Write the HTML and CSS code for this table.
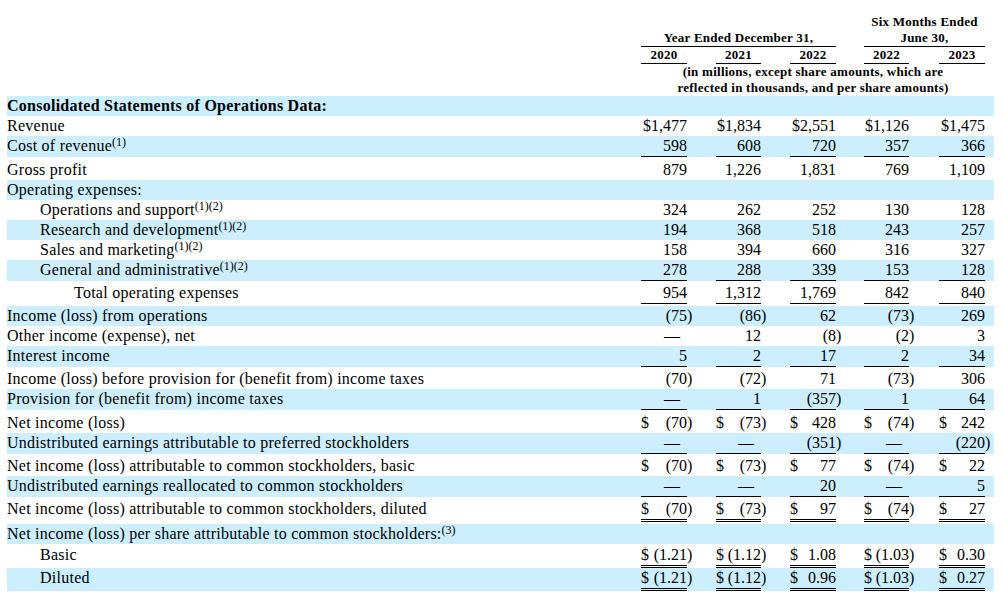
FILE: index.html
```html
<!DOCTYPE html>
<html>
<head>
<meta charset="UTF-8">
<title>Consolidated Statements of Operations Data</title>

<link rel="stylesheet" href="styles.css">
</head>

<body>

<table class="fin">
  <colgroup>
    <col style="width:634px"><col style="width:46px"><col style="width:29px"><col style="width:45px"><col style="width:29px"><col style="width:46px"><col style="width:28px"><col style="width:45px"><col style="width:30px"><col style="width:46px"><col style="width:9px">
  </colgroup>

  <tr class="hd">
    <td></td><td colspan="5"></td><td></td>
    <td colspan="3">Six Months Ended</td><td></td>
  </tr>
  <tr class="hd">
    <td></td><td colspan="5" class="ul">Year Ended December 31,</td><td></td>
    <td colspan="3" class="ul">June 30,</td><td></td>
  </tr>
  <tr class="hd">
    <td></td>
    <td class="ul">2020</td><td></td>
    <td class="ul">2021</td><td></td>
    <td class="ul">2022</td><td></td>
    <td class="ul">2022</td><td></td>
    <td class="ul">2023</td><td></td>
  </tr>
  <tr class="hd">
    <td></td>
    <td colspan="9">(in millions, except share amounts, which are<br>reflected in thousands, and per share amounts)</td>
    <td></td>
  </tr>

  <tr class="band"><td colspan="11" class="lbl sect">Consolidated Statements of Operations Data:</td></tr>

  <tr>
    <td class="lbl">Revenue</td>
    <td class="v">$1,477</td><td></td>
    <td class="v">$1,834</td><td></td>
    <td class="v">$2,551</td><td></td>
    <td class="v">$1,126</td><td></td>
    <td class="v">$1,475</td><td></td>
  </tr>
  <tr class="band">
    <td class="lbl">Cost of revenue<sup>(1)</sup></td>
    <td class="v ul">598</td><td></td>
    <td class="v ul">608</td><td></td>
    <td class="v ul">720</td><td></td>
    <td class="v ul">357</td><td></td>
    <td class="v ul">366</td><td></td>
  </tr>
  <tr class="t3">
    <td class="lbl">Gross profit</td>
    <td class="v">879</td><td></td>
    <td class="v">1,226</td><td></td>
    <td class="v">1,831</td><td></td>
    <td class="v">769</td><td></td>
    <td class="v">1,109</td><td></td>
  </tr>
  <tr class="band"><td colspan="11" class="lbl">Operating expenses:</td></tr>
  <tr>
    <td class="lbl i1">Operations and support<sup>(1)(2)</sup></td>
    <td class="v">324</td><td></td>
    <td class="v">262</td><td></td>
    <td class="v">252</td><td></td>
    <td class="v">130</td><td></td>
    <td class="v">128</td><td></td>
  </tr>
  <tr class="band">
    <td class="lbl i1">Research and development<sup>(1)(2)</sup></td>
    <td class="v">194</td><td></td>
    <td class="v">368</td><td></td>
    <td class="v">518</td><td></td>
    <td class="v">243</td><td></td>
    <td class="v">257</td><td></td>
  </tr>
  <tr>
    <td class="lbl i1">Sales and marketing<sup>(1)(2)</sup></td>
    <td class="v">158</td><td></td>
    <td class="v">394</td><td></td>
    <td class="v">660</td><td></td>
    <td class="v">316</td><td></td>
    <td class="v">327</td><td></td>
  </tr>
  <tr class="band">
    <td class="lbl i1">General and administrative<sup>(1)(2)</sup></td>
    <td class="v ul">278</td><td></td>
    <td class="v ul">288</td><td></td>
    <td class="v ul">339</td><td></td>
    <td class="v ul">153</td><td></td>
    <td class="v ul">128</td><td></td>
  </tr>
  <tr class="t2">
    <td class="lbl i2">Total operating expenses</td>
    <td class="v ul">954</td><td></td>
    <td class="v ul">1,312</td><td></td>
    <td class="v ul">1,769</td><td></td>
    <td class="v ul">842</td><td></td>
    <td class="v ul">840</td><td></td>
  </tr>
  <tr class="sp"><td colspan="11"></td></tr>

  <tr class="band">
    <td class="lbl">Income (loss) from operations</td>
    <td class="v">(75</td><td>)</td>
    <td class="v">(86</td><td>)</td>
    <td class="v">62</td><td></td>
    <td class="v">(73</td><td>)</td>
    <td class="v">269</td><td></td>
  </tr>
  <tr>
    <td class="lbl">Other income (expense), net</td>
    <td class="v dash">—</td><td></td>
    <td class="v">12</td><td></td>
    <td class="v">(8</td><td>)</td>
    <td class="v">(2</td><td>)</td>
    <td class="v">3</td><td></td>
  </tr>
  <tr class="band">
    <td class="lbl">Interest income</td>
    <td class="v ul">5</td><td></td>
    <td class="v ul">2</td><td></td>
    <td class="v ul">17</td><td></td>
    <td class="v ul">2</td><td></td>
    <td class="v ul">34</td><td></td>
  </tr>
  <tr class="t2">
    <td class="lbl">Income (loss) before provision for (benefit from) income taxes</td>
    <td class="v">(70</td><td>)</td>
    <td class="v">(72</td><td>)</td>
    <td class="v">71</td><td></td>
    <td class="v">(73</td><td>)</td>
    <td class="v">306</td><td></td>
  </tr>
  <tr class="band">
    <td class="lbl">Provision for (benefit from) income taxes</td>
    <td class="v ul dash">—</td><td></td>
    <td class="v ul">1</td><td></td>
    <td class="v ul">(357</td><td>)</td>
    <td class="v ul">1</td><td></td>
    <td class="v ul">64</td><td></td>
  </tr>
  <tr class="t3">
    <td class="lbl">Net income (loss)</td>
    <td class="v"><span class="d">$</span>(70</td><td>)</td>
    <td class="v"><span class="d">$</span>(73</td><td>)</td>
    <td class="v"><span class="d">$</span>428</td><td></td>
    <td class="v"><span class="d">$</span>(74</td><td>)</td>
    <td class="v"><span class="d">$</span>242</td><td></td>
  </tr>
  <tr class="band">
    <td class="lbl">Undistributed earnings attributable to preferred stockholders</td>
    <td class="v ul dash">—</td><td></td>
    <td class="v ul dash">—</td><td></td>
    <td class="v ul">(351</td><td>)</td>
    <td class="v ul dash">—</td><td></td>
    <td class="v ul">(220</td><td>)</td>
  </tr>
  <tr class="t2">
    <td class="lbl">Net income (loss) attributable to common stockholders, basic</td>
    <td class="v"><span class="d">$</span>(70</td><td>)</td>
    <td class="v"><span class="d">$</span>(73</td><td>)</td>
    <td class="v"><span class="d">$</span>77</td><td></td>
    <td class="v"><span class="d">$</span>(74</td><td>)</td>
    <td class="v"><span class="d">$</span>22</td><td></td>
  </tr>
  <tr class="band">
    <td class="lbl">Undistributed earnings reallocated to common stockholders</td>
    <td class="v ul dash">—</td><td></td>
    <td class="v ul dash">—</td><td></td>
    <td class="v ul">20</td><td></td>
    <td class="v ul dash">—</td><td></td>
    <td class="v ul">5</td><td></td>
  </tr>
  <tr class="t2">
    <td class="lbl">Net income (loss) attributable to common stockholders, diluted</td>
    <td class="v dul"><span class="d">$</span>(70</td><td>)</td>
    <td class="v dul"><span class="d">$</span>(73</td><td>)</td>
    <td class="v dul"><span class="d">$</span>97</td><td></td>
    <td class="v dul"><span class="d">$</span>(74</td><td>)</td>
    <td class="v dul"><span class="d">$</span>27</td><td></td>
  </tr>
  <tr class="sp"><td colspan="11"></td></tr>

  <tr class="band"><td colspan="11" class="lbl">Net income (loss) per share attributable to common stockholders:<sup>(3)</sup></td></tr>
  <tr class="t1">
    <td class="lbl i1">Basic</td>
    <td class="v dul"><span class="d">$</span>(1.21</td><td>)</td>
    <td class="v dul"><span class="d">$</span>(1.12</td><td>)</td>
    <td class="v dul"><span class="d">$</span>1.08</td><td></td>
    <td class="v dul"><span class="d">$</span>(1.03</td><td>)</td>
    <td class="v dul"><span class="d">$</span>0.30</td><td></td>
  </tr>
  <tr class="band">
    <td class="lbl i1">Diluted</td>
    <td class="v dul"><span class="d">$</span>(1.21</td><td>)</td>
    <td class="v dul"><span class="d">$</span>(1.12</td><td>)</td>
    <td class="v dul"><span class="d">$</span>0.96</td><td></td>
    <td class="v dul"><span class="d">$</span>(1.03</td><td>)</td>
    <td class="v dul"><span class="d">$</span>0.27</td><td></td>
  </tr>
</table>

</body>
</html>
```

FILE: styles.css
```css
body{
  margin:0;
  background:#fff;
  color:#000;
  font-family:"Liberation Serif","Times New Roman",serif;
}

.fin{
  table-layout:fixed;
  width:987px;
  margin:14px 0 0 7px;
  border-collapse:separate;
  border-spacing:0;
  font-size:16px;
}

.fin td{
  padding:0;
  line-height:20px;
  height:20px;
  white-space:nowrap;
  vertical-align:top;
}

/* column headings */
.hd td{
  font-size:13px;
  font-weight:bold;
  line-height:16px;
  height:16px;
  text-align:center;
  letter-spacing:0.25px;
}

.band{
  background:#cceeff;
}

.lbl{
  letter-spacing:0.25px;
}

.sect{
  font-weight:bold;
}

.i1{ padding-left:33px !important; }
.i2{ padding-left:67px !important; }

.v{
  text-align:right;
}

.d{
  float:left;
}

.dash{
  padding-right:7px !important;
}

.ul{
  border-bottom:1px solid #000;
}

.dul{
  border-bottom:3px double #000;
}

.t1 td{ padding-top:1px; }
.t2 td{ padding-top:2px; }
.t3 td{ padding-top:3px; }

.sp td{
  height:2px;
  line-height:0;
}

sup{
  font-size:12px;
  line-height:0;
  letter-spacing:0;
  vertical-align:5px;
}
```
